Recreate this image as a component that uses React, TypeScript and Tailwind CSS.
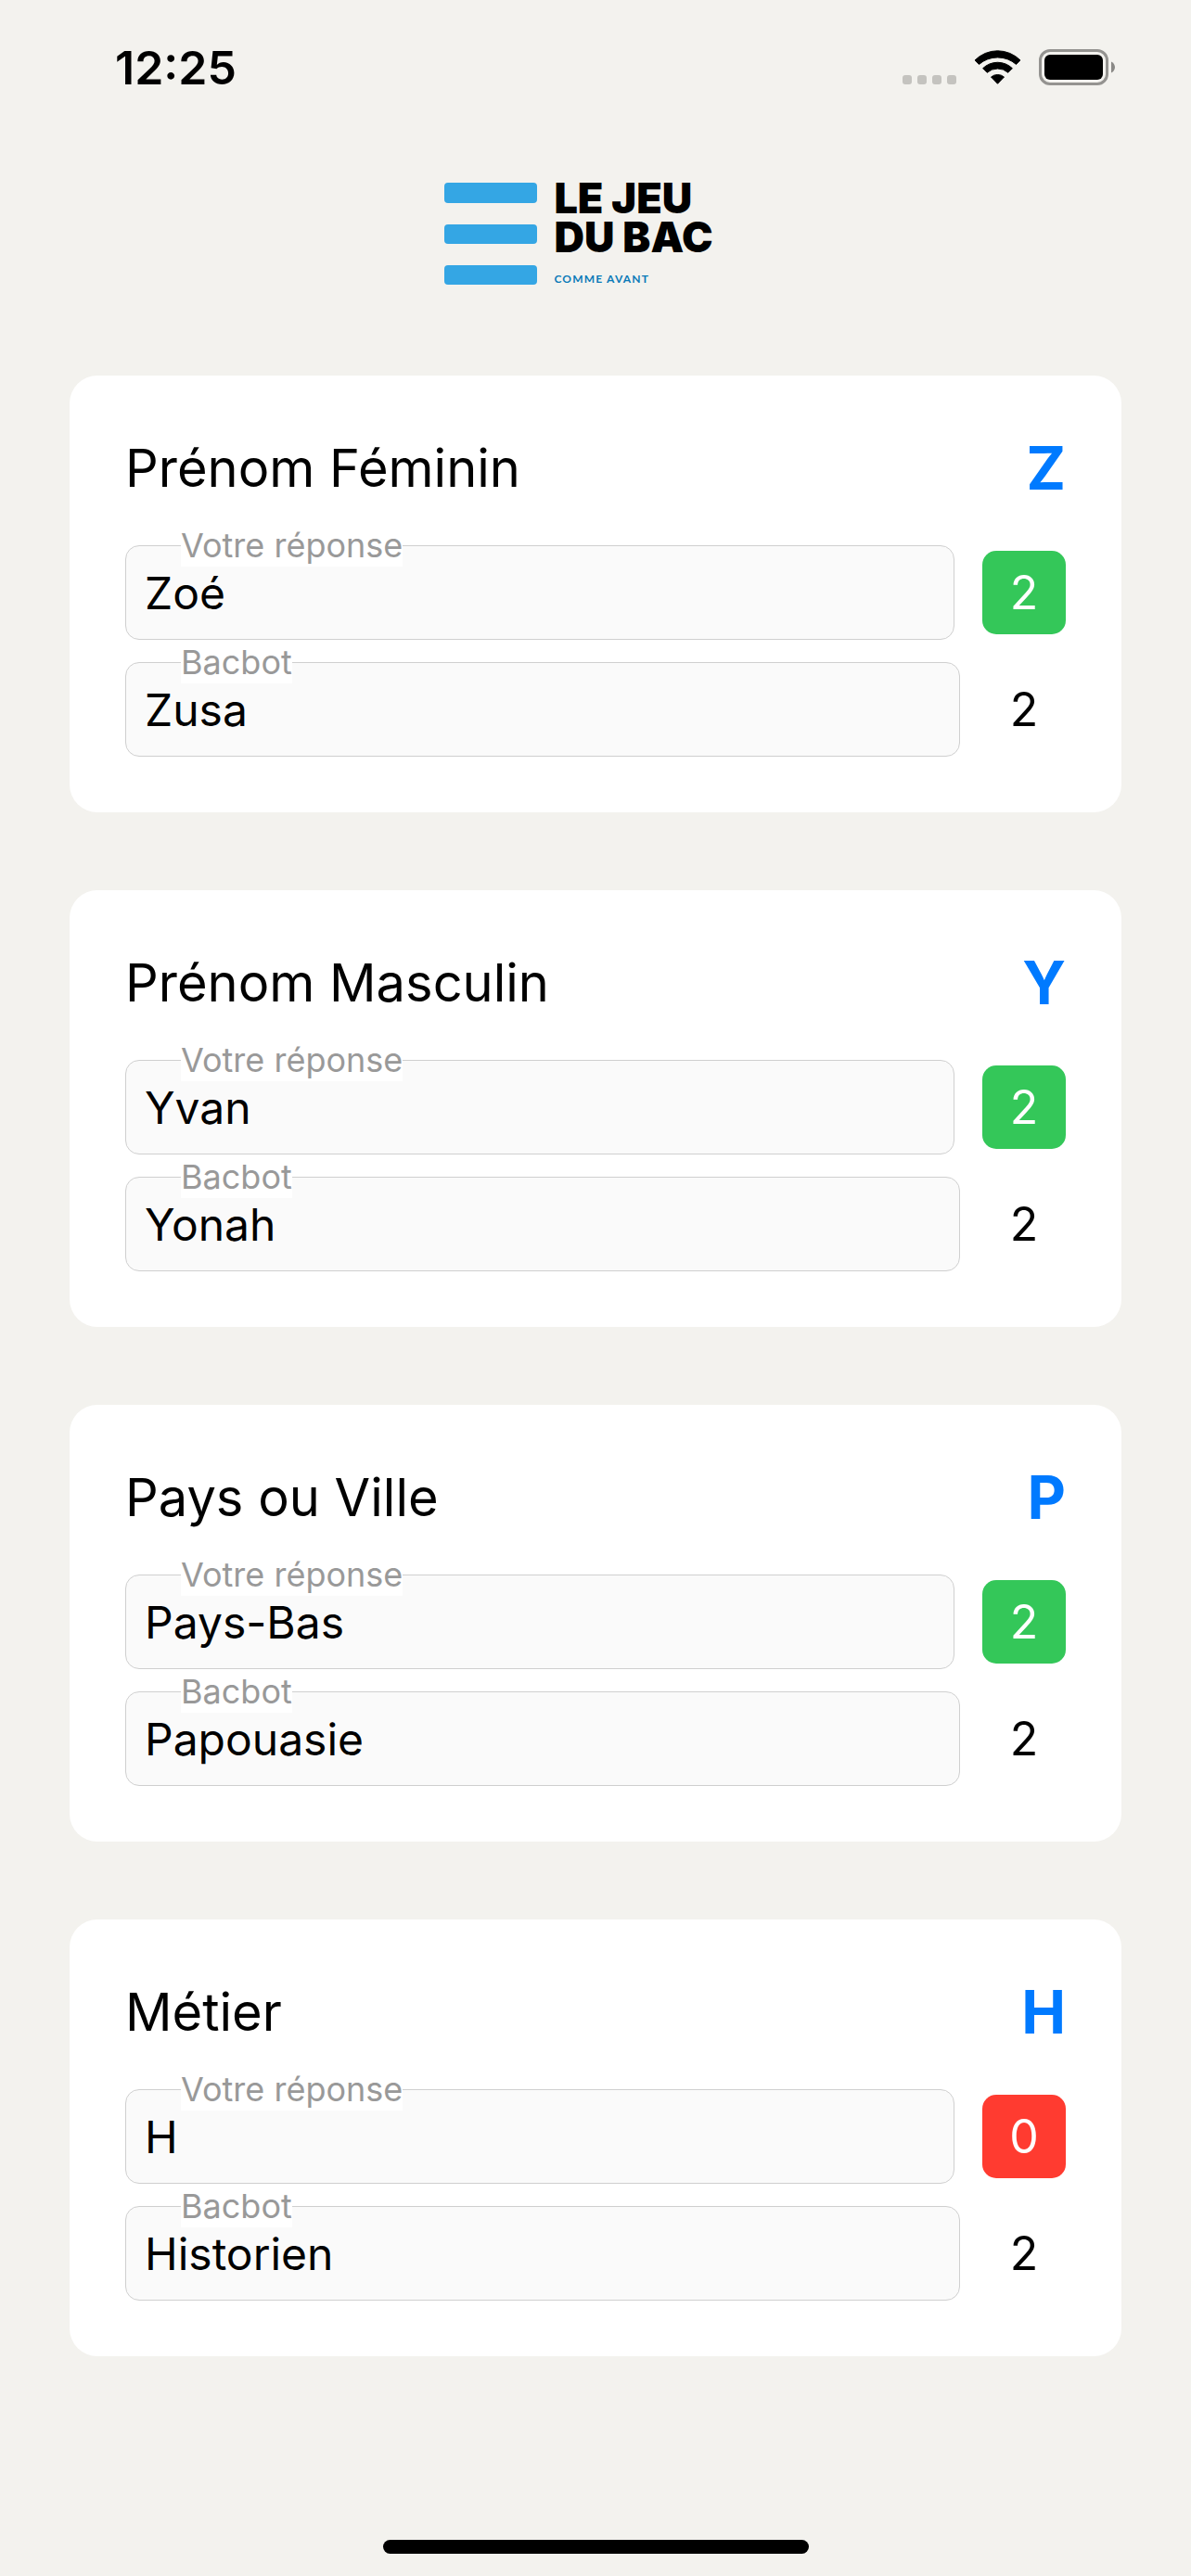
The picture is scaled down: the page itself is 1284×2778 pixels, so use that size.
import { useState } from "react";

interface Category {
  id: string;
  title: string;
  letter: string;
  answer: string;
  score: number;
  botAnswer: string;
  botScore: number;
}

const categories: Category[] = [
  { id: "female", title: "Prénom Féminin", letter: "Z", answer: "Zoé", score: 2, botAnswer: "Zusa", botScore: 2 },
  { id: "male", title: "Prénom Masculin", letter: "Y", answer: "Yvan", score: 2, botAnswer: "Yonah", botScore: 2 },
  { id: "place", title: "Pays ou Ville", letter: "P", answer: "Pays-Bas", score: 2, botAnswer: "Papouasie", botScore: 2 },
  { id: "job", title: "Métier", letter: "H", answer: "H", score: 0, botAnswer: "Historien", botScore: 2 },
];

function StatusBar() {
  return (
    <div className="flex h-[145px] items-center justify-between pl-[124px] pr-[82px]">
      <span className="text-[50px] font-semibold leading-none">12:25</span>
      <div className="flex items-center gap-[18px]">
        {/* No signal */}
        <svg width="59" height="39" viewBox="0 0 59 39" fill="#c4c3bf">
          <rect x="0" y="28" width="10" height="10" rx="3" />
          <rect x="16" y="28" width="10" height="10" rx="3" />
          <rect x="32" y="28" width="10" height="10" rx="3" />
          <rect x="48" y="28" width="10" height="10" rx="3" />
        </svg>
        {/* Wifi */}
        <svg width="51" height="39" viewBox="0 0 51 39" fill="#000" stroke="#000" strokeWidth="1" strokeLinejoin="round">
          <path d="M1 12A34.5 34.5 0 0 1 50 12L45.5 16.4A30.4 30.4 0 0 0 5.5 16.4Z" />
          <path d="M9.6 20.7A22.9 22.9 0 0 1 41.4 20.7L36.8 25.3A17 17 0 0 0 14.2 25.3Z" />
          <path d="M18.5 30A11 11 0 0 1 32.5 30L25.5 37.3Z" />
        </svg>
        {/* Battery */}
        <svg width="83" height="39" viewBox="0 0 83 39">
          <rect x="2.5" y="1.5" width="72" height="36" rx="10.5" fill="none" stroke="#949390" strokeWidth="3" />
          <rect x="7" y="6" width="63" height="27" rx="6" fill="#000" />
          <path d="M79 13.5C81.5 14.6 83 17 83 19.5S81.5 24.4 79 25.5Z" fill="#8a8986" />
        </svg>
      </div>
    </div>
  );
}

function Logo() {
  return (
    <div className="flex h-[110px] gap-[18px]">
      <svg width="100" height="110" viewBox="0 0 100 110" fill="#34a6e4">
        <rect x="0" y="0" width="100" height="22" rx="4" />
        <rect x="0" y="45" width="100" height="21" rx="4" />
        <rect x="0" y="89" width="100" height="21" rx="4" />
      </svg>
      <div className="-mt-1">
        <h1 className="text-[45px] font-black leading-[42px]">
          <span className="block">LE JEU</span>
          <span className="block">DU BAC</span>
        </h1>
        <p className="mt-4 font-[Lato,sans-serif] text-xs font-bold leading-4 tracking-widest text-[#0a7ab8]">
          COMME AVANT
        </p>
      </div>
    </div>
  );
}

interface FieldProps {
  id: string;
  label: string;
  initial: string;
}

function Field({ id, label, initial }: FieldProps) {
  const [value, setValue] = useState(initial);

  return (
    <div className="relative min-w-0 flex-1">
      <input
        id={id}
        type="text"
        value={value}
        onChange={(e) => setValue(e.target.value)}
        className="block h-[102px] w-full rounded-[15px] border border-[#cfcfcf] bg-[#fafafa] px-5 text-[48px] outline-none"
      />
      <label
        htmlFor={id}
        className="absolute -top-[23px] left-[60px] bg-white text-[36px] leading-[46px] text-[#999999]"
      >
        {label}
      </label>
    </div>
  );
}

function CategoryCard({ category }: { category: Category }) {
  return (
    <section className="rounded-[30px] bg-white p-[60px]">
      <div className="mb-[43px] flex items-center justify-between leading-[80px]">
        <h2 className="text-[56px]">{category.title}</h2>
        <span className="text-[64px] font-bold text-[#007aff]">{category.letter}</span>
      </div>
      <div className="flex items-center gap-[30px]">
        <Field id={`${category.id}-answer`} label="Votre réponse" initial={category.answer} />
        <span
          className={`flex size-[90px] items-center justify-center rounded-[15px] text-[50px] text-white ${
            category.score > 0 ? "bg-[#34c759]" : "bg-[#ff3b30]"
          }`}
        >
          {category.score}
        </span>
      </div>
      <div className="mt-6 flex items-center gap-6">
        <Field id={`${category.id}-bot`} label="Bacbot" initial={category.botAnswer} />
        <span className="flex size-[90px] items-center justify-center text-[50px]">
          {category.botScore}
        </span>
      </div>
    </section>
  );
}

export default function App() {
  return (
    <div className="flex min-h-screen flex-col bg-[#f3f2ee] font-[Inter,sans-serif] text-black">
      <StatusBar />
      <header className="mb-[98px] mt-[52px] flex justify-center pr-9">
        <Logo />
      </header>
      <main className="flex flex-col gap-[84px] px-[75px]">
        {categories.map((category) => (
          <CategoryCard key={category.id} category={category} />
        ))}
      </main>
      <div className="mx-auto mb-6 mt-auto h-[15px] w-[459px] rounded-full bg-black" />
    </div>
  );
}
